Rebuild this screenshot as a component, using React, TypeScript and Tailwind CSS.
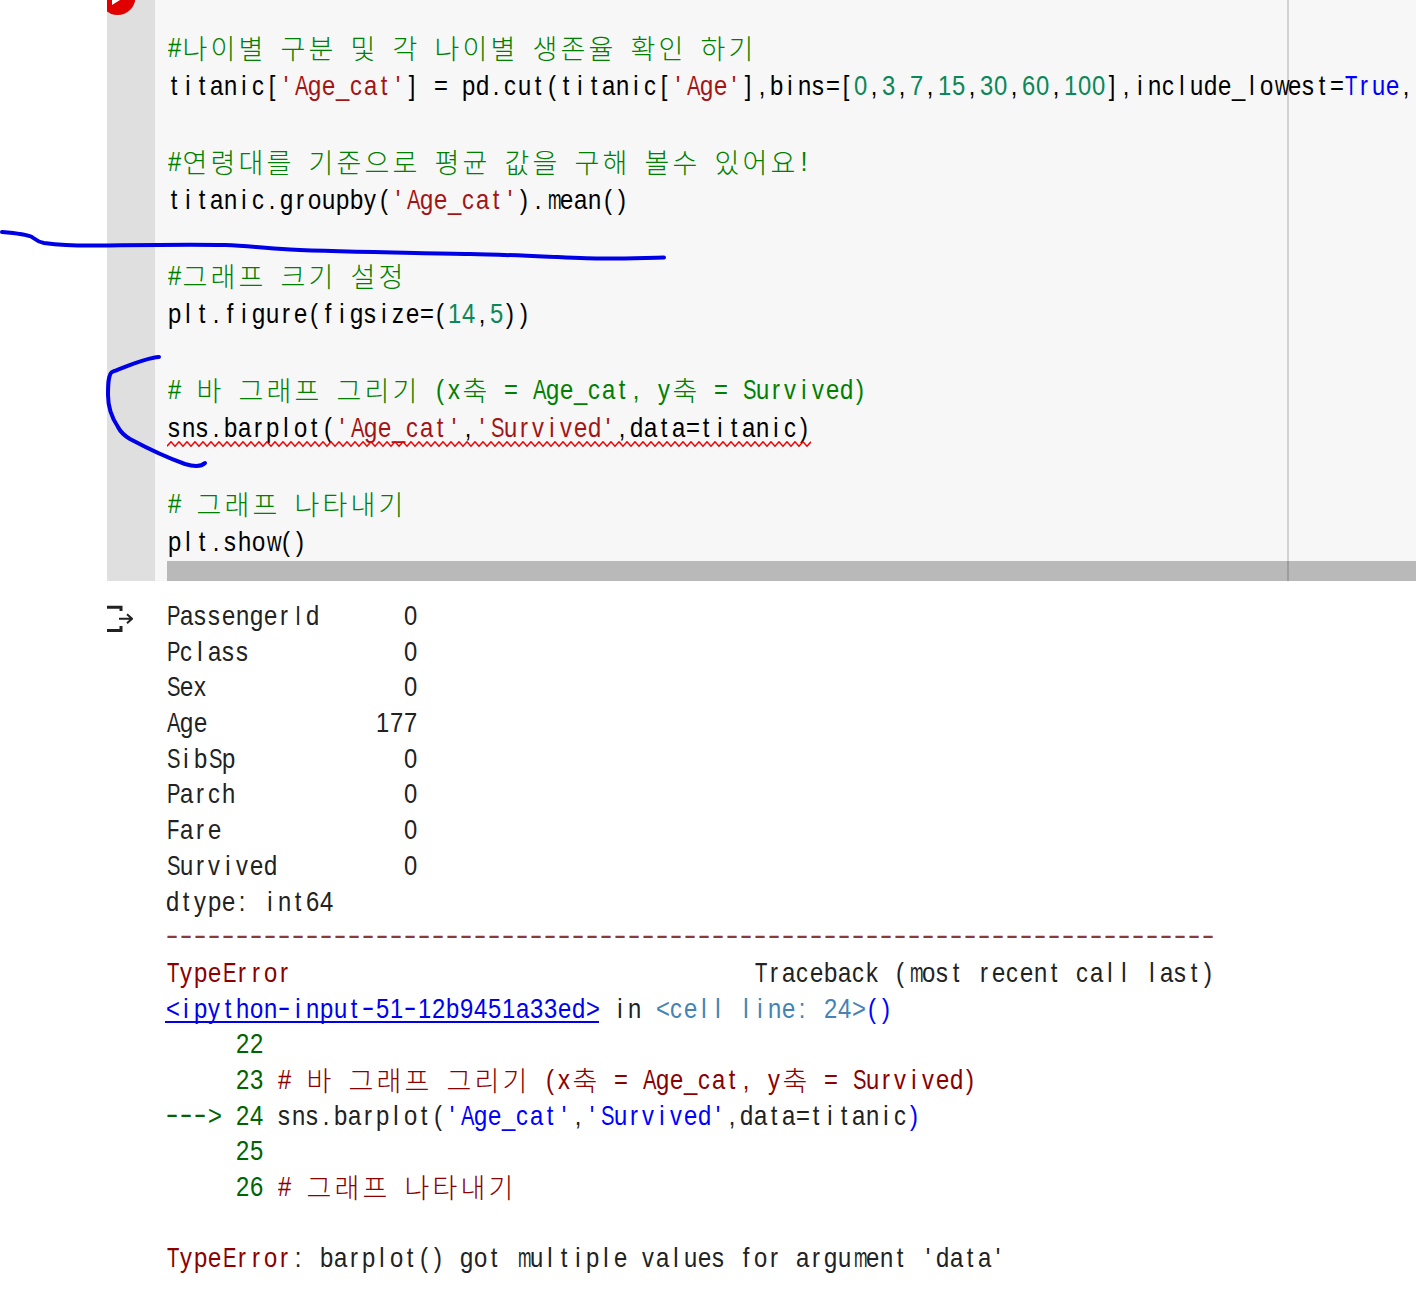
const HANGUL = /[\uAC00-\uD7A3]/;
const WIDE = /[A-Zw]/;

type Seg = [string, string];

// the reference font is a fixed grid: latin takes one 14px cell, hangul takes two
function cellClass(ch: string) {
  if (HANGUL.test(ch)) {
    return "inline-block w-[28px] text-center font-['Noto_Sans_CJK_KR',sans-serif] text-[27px] font-light leading-none align-[-2px]";
  }
  if (ch === "-") return "inline-block w-[14px] text-center scale-x-[1.35] -translate-y-[2px]";
  if (ch === "m") return "inline-block w-[14px] text-center scale-x-[0.58]";
  if (WIDE.test(ch)) return "inline-block w-[14px] text-center scale-x-[0.72]";
  return "inline-block w-[14px] text-center scale-x-[0.85]";
}

function Run({ text, color }: { text: string; color: string }) {
  return (
    <span className={color}>
      {Array.from(text).map((ch, i) => (
        <span key={i} className={cellClass(ch)}>
          {ch}
        </span>
      ))}
    </span>
  );
}

function Line({ segs, h }: { segs: Seg[]; h: string }) {
  return (
    <div className={`${h} whitespace-pre`}>
      {segs.map(([text, color], i) =>
        color === LINK ? (
          <span key={i} className="inline-block border-b-2 border-[#0000ee] leading-[25px]">
            <Run text={text} color={color} />
          </span>
        ) : (
          <Run key={i} text={text} color={color} />
        )
      )}
    </div>
  );
}

const K = "text-[#000000]";
const G = "text-[#008000]";
const R = "text-[#a31515]";
const N = "text-[#09885a]";
const B = "text-[#0000ff]";
const D = "text-[#222222]";
const M = "text-[#8b0000]";
const L = "text-[#006400]";
const S = "text-[#4682b4]";
const LINK = "text-[#0000ee]";
const DASH = "text-[#8b3a3a]";

const code: Seg[][] = [
  [["#나이별 구분 및 각 나이별 생존율 확인 하기", G]],
  [["titanic[", K], ["'Age_cat'", R], ["] = pd.cut(titanic[", K], ["'Age'", R], ["],bins=[", K], ["0", N], [",", K], ["3", N], [",", K], ["7", N], [",", K], ["15", N], [",", K], ["30", N], [",", K], ["60", N], [",", K], ["100", N], ["],include_lowest=", K], ["True", B], [",", K]],
  [],
  [["#연령대를 기준으로 평균 값을 구해 볼수 있어요!", G]],
  [["titanic.groupby(", K], ["'Age_cat'", R], [").mean()", K]],
  [],
  [["#그래프 크기 설정", G]],
  [["plt.figure(figsize=(", K], ["14", N], [",", K], ["5", N], ["))", K]],
  [],
  [["# 바 그래프 그리기 (x축 = Age_cat, y축 = Survived)", G]],
  [["sns.barplot(", K], ["'Age_cat'", R], [",", K], ["'Survived'", R], [",data=titanic)", K]],
  [],
  [["# 그래프 나타내기", G]],
  [["plt.show()", K]],
];

const counts = [
  ["PassengerId", "0"],
  ["Pclass", "0"],
  ["Sex", "0"],
  ["Age", "177"],
  ["SibSp", "0"],
  ["Parch", "0"],
  ["Fare", "0"],
  ["Survived", "0"],
];

const output: Seg[][] = [
  ...counts.map(([name, value]): Seg[] => [[name.padEnd(18 - value.length, " ") + value, D]]),
  [["dtype: int64", D]],
  [["-".repeat(75), DASH]],
  [["TypeError", M], ["                                 Traceback (most recent call last)", D]],
  [["<ipython-input-51-12b9451a33ed>", LINK], [" in ", D], ["<cell line: 24>", S], ["()", B]],
  [["     22", L]],
  [["     23 ", L], ["# 바 그래프 그리기 (x축 = Age_cat, y축 = Survived)", M]],
  [["---> 24 ", L], ["sns.barplot(", D], ["'Age_cat'", B], [",", D], ["'Survived'", B], [",data=titanic", D], [")", B]],
  [["     25", L]],
  [["     26 ", L], ["# 그래프 나타내기", M]],
  [],
  [["TypeError", M], [": barplot() got multiple values for argument 'data'", D]],
];

function Squiggle() {
  const d = Array.from({ length: 161 }, (_, i) => `L${(i + 1) * 4} ${i % 2 === 0 ? 0.8 : 5.2}`).join(" ");
  return (
    <svg className="absolute left-[167px] top-[441px]" width="644" height="6" viewBox="0 0 644 6">
      <path d={`M0 5.200 ${d}`} fill="none" stroke="#f00000" strokeWidth="1.5" />
    </svg>
  );
}

function PenMarks() {
  return (
    <svg className="absolute left-0 top-0 pointer-events-none" width="1416" height="480" viewBox="0 0 1416 480">
      <path
        d="M2 232 C14 233 26 234 32 237 C36 240 38 242 44 243 C60 245 76 246 100 245.500 C140 245 190 244 225 245 C250 246 260 248 290 249.500 C340 252 400 252.500 470 254 C520 255 570 258 600 258.500 C625 258.800 645 257.800 664 257.500"
        fill="none"
        stroke="#0000e6"
        strokeWidth="4"
        strokeLinecap="round"
      />
      <path
        d="M159 357 C145 358 128 366 112 372 C108 375 108 385 108 395 C108 408 112 418 118 427 C121 433 125 436 130 439 C145 447 165 457 185 464 C195 467 202 466 205 463"
        fill="none"
        stroke="#0000e6"
        strokeWidth="4"
        strokeLinecap="round"
      />
    </svg>
  );
}

export default function App() {
  return (
    <div className="relative h-[1301px] w-[1416px] overflow-hidden bg-white font-['Liberation_Sans',sans-serif] text-[28px]">
      {/* code cell */}
      <div className="ml-[107px] flex h-[581px]">
        <div className="w-[48px] shrink-0 bg-[#dfdfdf]">
          <svg width="28" height="16" viewBox="0 0 28 16">
            <circle cx="10.500" cy="-3" r="18" fill="#e00000" />
            <path d="M5 5 L13 0 L5 0 Z" fill="#ffffff" />
          </svg>
        </div>
        <div className="relative flex flex-1 flex-col bg-[#f7f7f7]">
          <div className="flex-1 pl-[12px] pt-[29px]">
            {code.map((segs, i) => (
              <Line key={i} segs={segs} h="h-[38px] leading-[38px]" />
            ))}
          </div>
          <div className="ml-[12px] h-[20px] bg-[#b9b9b9]" />
          {/* print margin ruler, runs over the text and the scrollbar */}
          <div className="absolute bottom-0 left-[1132px] top-0 w-[2px] bg-[#000000]/15" />
        </div>
      </div>

      {/* output */}
      <div className="flex pl-[107px] pt-[17px]">
        <div className="w-[58px] shrink-0 pt-[7px]">
          <svg width="26" height="28" viewBox="0 0 26 28" fill="none" stroke="#222222">
            <path d="M0 2.200 H14 V6" strokeWidth="3" />
            <path d="M0 25.500 H14 V21" strokeWidth="3" />
            <path d="M12 13.700 H24 M20 9.200 L25 13.700 L20 18.200" strokeWidth="2" />
          </svg>
        </div>
        <div>
          {output.map((segs, i) => (
            <Line key={i} segs={segs} h="h-[35.7px] leading-[35.7px]" />
          ))}
        </div>
      </div>

      <Squiggle />
      <PenMarks />
    </div>
  );
}
